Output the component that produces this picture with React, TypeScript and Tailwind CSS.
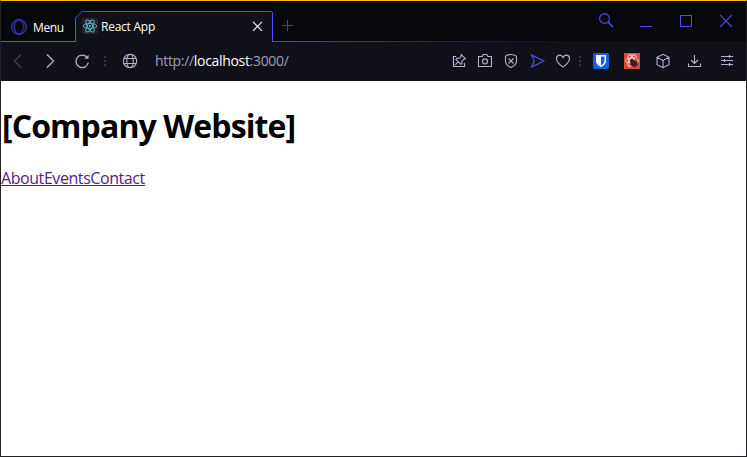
import type { ReactNode } from "react";

function Icon({ className = "", children }: { className?: string; children: ReactNode }) {
  return (
    <svg
      viewBox="0 0 16 16"
      fill="none"
      stroke="currentColor"
      strokeWidth="1.1"
      className={`block h-4 w-4 shrink-0 ${className}`}
    >
      {children}
    </svg>
  );
}

function Dots({ className = "" }: { className?: string }) {
  return (
    <Icon className={`text-[#34343f] ${className}`}>
      <path d="M7 4h2M7 8h2M7 12h2" strokeWidth="2" />
    </Icon>
  );
}

function TitleBar() {
  return (
    <header className="flex h-[41px] items-start bg-[#08080c] text-[12px] text-white">
      <div className="flex h-full w-[74px] border-b border-[#4c4bff] pt-[18px]">
        <Icon className="ml-[10px] text-[#3d39cf]">
          <circle cx="8" cy="8" r="7.4" />
          <ellipse cx="8" cy="8" rx="4.4" ry="7.2" strokeWidth=".9" />
          <path d="M4.5 3.5C1.8 6 1.8 10 4.5 12.5M11.5 3.5c2.700 2.500 2.700 6.500 0 9" strokeWidth=".4" />
        </Icon>
        <span className="ml-[6px] mt-[1px] text-[12px] leading-4 tracking-[-0.4px]">Menu</span>
      </div>
      <div className="relative mt-[10px] flex h-[31px] w-[198px] pt-[7px]">
        <svg viewBox="0 0 198 31" className="absolute inset-0 h-[31px] w-[198px]" fill="none">
          <path d="M.5 31V7L7 .5h189.500l1 1V31" fill="#101018" stroke="#4c4bff" />
        </svg>
        <svg viewBox="0 0 16 16" className="relative ml-[7px] h-4 w-4 shrink-0" fill="none" stroke="#57b8cc" strokeWidth=".9">
          <rect width="16" height="16" rx="2" fill="#20232a" stroke="none" />
          <ellipse cx="8" cy="8" rx="6.700" ry="2.600" />
          <ellipse cx="8" cy="8" rx="6.700" ry="2.600" transform="rotate(60 8 8)" />
          <ellipse cx="8" cy="8" rx="6.700" ry="2.600" transform="rotate(120 8 8)" />
          <circle cx="8" cy="8" r="1.100" fill="#57b8cc" stroke="none" />
        </svg>
        <span className="relative ml-[3px] mt-[1px] w-[150px] leading-4 tracking-[-0.25px]">React App</span>
        <svg viewBox="0 0 12 12" className="relative mt-[2px] h-3 w-3 shrink-0" stroke="#ededf2" strokeWidth="1.200">
          <path d="m2 1.800 9 9m0-9-9 9" />
        </svg>
      </div>
      <div className="flex h-full flex-1 flex-col justify-between">
        <div className="flex pt-[11px] text-[#4c4bff]">
          <svg viewBox="0 0 12 12" className="ml-[9px] mt-[8px] h-3 w-3" stroke="currentColor">
            <path d="M5.500 0v11M0 5.500h11" opacity=".8" />
          </svg>
          <Icon className="ml-[304px]">
            <circle cx="6.500" cy="6.500" r="4.900" />
            <path d="m10 10 5 5" strokeWidth="1.500" />
          </Icon>
          <Icon className="ml-[24px]">
            <path d="M2 14.500h12" strokeWidth="1" />
          </Icon>
          <Icon className="ml-[24px]">
            <path d="M2.500 3.500h11v11h-11z" strokeWidth="1" />
          </Icon>
          <Icon className="ml-[24px]">
            <path d="m2.200 3.200 11.600 11.600m0-11.600L2.200 14.800" />
          </Icon>
        </div>
        <div className="h-px bg-linear-to-r from-[#4540e8] via-[#25215f] via-35% to-[#101018] to-65%" />
      </div>
    </header>
  );
}

function AddressBar() {
  return (
    <div className="flex h-[39px] items-start border-b border-[#160e1c] bg-[#101018] pt-[11px] text-[#b5b1cf]">
      <Icon className="ml-[9px] text-[#43434f]">
        <path d="m11 1.500-6.500 6.500 6.500 6.500" />
      </Icon>
      <Icon className="ml-4">
        <path d="m5 1.500 6.500 6.500L5 14.500" strokeWidth="1.300" />
      </Icon>
      <Icon className="ml-4">
        <path d="M14.300 9.500A6.200 6.200 0 1 1 12.900 4.300" strokeWidth="1.300" />
        <path d="M14.500 1.800v4h-4z" fill="currentColor" stroke="none" />
      </Icon>
      <Dots className="ml-[7px]" />
      <Icon className="ml-[9px]">
        <circle cx="8" cy="8" r="6.700" />
        <ellipse cx="8" cy="8" rx="3.200" ry="6.700" />
        <path d="M2 5.500h12M2 10.500h12" />
      </Icon>
      <div className="ml-[17px] w-[296px] text-[14px] leading-4 tracking-[-0.32px] text-[#a19db8]">
        http://<span className="text-white">localhost</span>:3000/
      </div>
      <Icon>
        <path d="M5 3.500H2.500v10h11V10" strokeWidth="1.200" />
        <path d="m10.300 1.600 4.100 4.100-1.500.5-2 2 .2 2.300-1.300.8-4.900-4.900.9-1.300 2.400.2 1.700-1.800zM7.300 8.700 4.200 11.800" />
      </Icon>
      <Icon className="ml-[10px]">
        <path d="M1.500 3.500h3.700l1-2h3.600l1 2h3.700v10h-13z" />
        <circle cx="8" cy="8.400" r="2.500" />
      </Icon>
      <Icon className="ml-[10px]">
        <path d="M8 1.500c1.800 0 3.800.5 5.500 1.600V8c0 3.200-2.500 5.200-5.500 6.500C5 13.200 2.500 11.200 2.500 8V3.100C4.200 2 6.200 1.500 8 1.500z" />
        <path d="m5.500 5.500 5 5m0-5-5 5" />
      </Icon>
      <Icon className="ml-[11px] text-[#4c4bdf]">
        <path d="M1.800 2.200 13.800 8l-12 5.800L4.300 8z" strokeWidth="1.300" />
      </Icon>
      <Icon className="ml-[9px]">
        <path d="M8 14.100C4.500 11.500 1.500 8.900 1.500 5.700c0-4.200 5-4.900 6.500-1.200 1.500-3.700 6.500-3 6.500 1.200 0 3.200-3 5.800-6.500 8.400z" />
      </Icon>
      <Dots className="ml-px" />
      <Icon className="ml-[5px]">
        <rect width="16" height="16" rx="2" fill="#175ddc" stroke="none" />
        <path d="M3 2h10v6c0 3-2.500 4.700-5 6-2.500-1.300-5-3-5-6z" fill="white" stroke="none" />
        <path d="M8 3.500h3.500V8c0 2-1.500 3.200-3.500 4.300z" fill="#175ddc" stroke="none" />
      </Icon>
      <Icon className="ml-[15px]">
        <rect width="16" height="16" fill="#d9473b" stroke="none" />
        <g stroke="#f6d3cf" strokeWidth="1">
          <ellipse cx="8" cy="7.500" rx="6.500" ry="2.600" />
          <ellipse cx="8" cy="7.500" rx="6.500" ry="2.600" transform="rotate(60 8 7.500)" />
          <ellipse cx="8" cy="7.500" rx="6.500" ry="2.600" transform="rotate(120 8 7.500)" />
        </g>
        <g stroke="#351815" fill="#351815" strokeWidth=".8">
          <ellipse cx="9.800" cy="10.500" rx="2.700" ry="3.300" transform="rotate(-35 9.800 10.500)" />
          <circle cx="7.600" cy="7.800" r="1.200" />
          <path d="m6 10 7-1M7 13l6-5M11 7l1-2M12 11h2" />
        </g>
        <path d="m7.500 8 4 5" stroke="#b83e34" strokeWidth=".6" />
      </Icon>
      <Icon className="ml-[15px]">
        <path d="m8 1.300 6 3v7.400l-6 3-6-3V4.300zM2 4.300l6 3.200 6-3.200M8 7.500v7.200" />
      </Icon>
      <Icon className="ml-4">
        <path d="M7.500 2v8M4 7l3.500 3.500L11 7M1.500 10.500v3h12v-3" />
      </Icon>
      <Icon className="ml-4">
        <path d="M2 3.500h12M2 7.500h12M2 11.500h12" strokeWidth="1" />
        <path d="M10.500 2v3M5.500 6v3M10.500 10v3" strokeWidth="1.200" />
      </Icon>
    </div>
  );
}

export default function App() {
  return (
    <div className="flex h-[457px] w-[747px] flex-col overflow-hidden border border-[#222226] border-t-[#ffb91f] bg-white font-['Open_Sans','Noto_Sans',sans-serif]">
      <TitleBar />
      <AddressBar />
      <main className="flex-1 pt-[23px] text-black">
        <h1 className="whitespace-nowrap pl-px text-[32px] font-bold leading-[43px] tracking-[-0.9px]">[Company Website]</h1>
        <nav className="mt-[20px] flex text-[16px] leading-[22px] tracking-[-0.43px] text-[#551a8b] underline">
          <a href="#about">About</a>
          <a href="#events">Events</a>
          <a href="#contact">Contact</a>
        </nav>
      </main>
    </div>
  );
}
